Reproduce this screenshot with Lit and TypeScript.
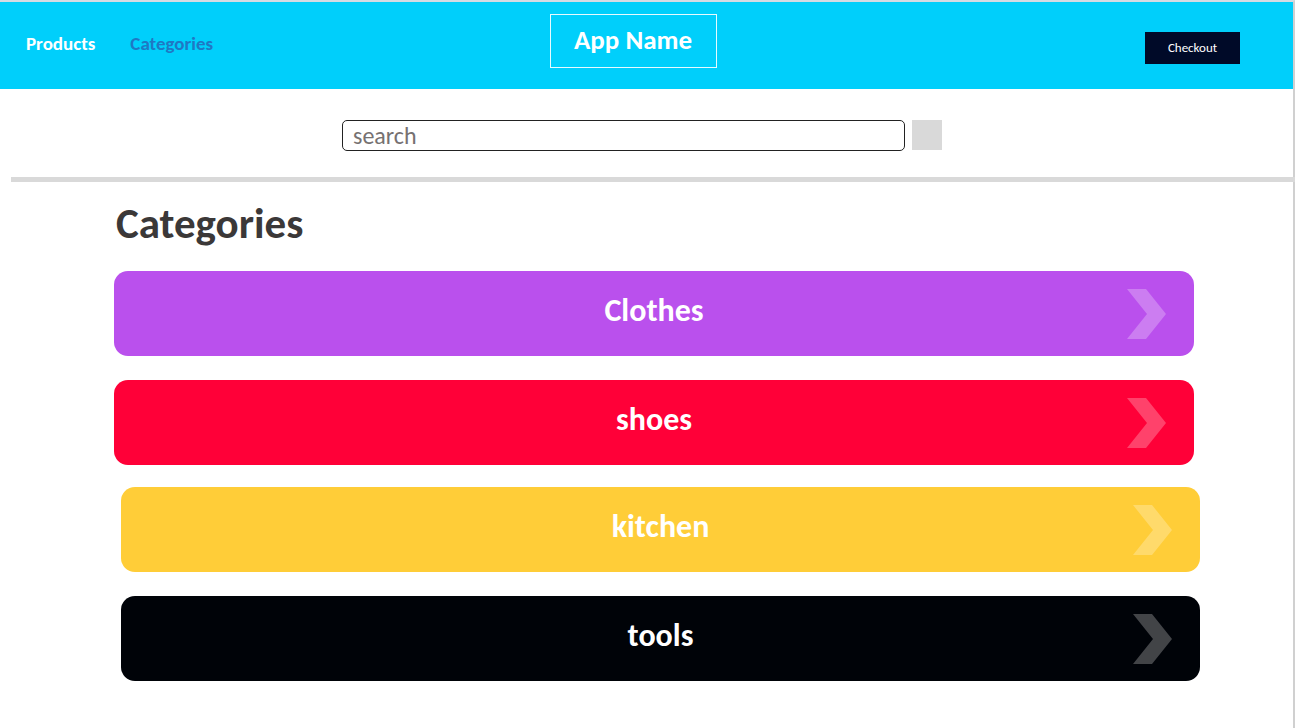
import { LitElement, html, css } from "lit";
import { customElement, property } from "lit/decorators.js";

@customElement("category-card")
class CategoryCard extends LitElement {
  @property() name = "";

  static styles = css`
    :host {
      display: block;
    }
    .card {
      display: grid;
      grid-template-columns: 1fr auto 1fr;
      align-items: center;
      box-sizing: border-box;
      min-height: 85px;
      padding: 0 28px;
      border-radius: 14px;
      background: var(--card-color);
      color: #fff;
      font-weight: 700;
      font-size: 32px;
      line-height: 32px;
      text-decoration: none;
    }
    .name {
      grid-column: 2;
      padding-bottom: 6px;
    }
    .arrow {
      display: block;
      justify-self: end;
      width: 39px;
      height: 50px;
      fill: #fff;
      fill-opacity: 0.26;
    }
  `;

  render() {
    return html`
      <a class="card" href="#${this.name.toLowerCase()}">
        <span class="name">${this.name}</span>
        <svg class="arrow" viewBox="0 0 39 50" aria-hidden="true">
          <path d="M0 0H19L39 25L19 50H0L20 25Z" />
        </svg>
      </a>
    `;
  }
}

@customElement("app-root")
class AppRoot extends LitElement {
  static styles = css`
    :host {
      display: block;
      box-sizing: border-box;
      min-height: 100vh;
      border-top: 2px solid #d5dbe3;
      border-right: 2px solid #d0d0d0;
      background: #fff;
      font-family: Carlito, Lato, sans-serif;
    }
    .header {
      display: grid;
      grid-template-columns: 1fr auto 1fr;
      align-items: start;
      padding: 12px 53px 21px 26px;
      background: #00cffb;
    }
    .nav {
      display: flex;
      gap: 35px;
      padding-top: 20px;
      font-size: 19px;
      font-weight: 700;
      line-height: 20px;
    }
    .link {
      color: #fff;
      text-decoration: none;
    }
    .current {
      color: #1f78c4;
    }
    .brand {
      box-sizing: border-box;
      min-width: 167px;
      height: 54px;
      border: 1px solid #e6faff;
      color: #fff;
      font-size: 27px;
      font-weight: 700;
      line-height: 50px;
      text-align: center;
    }
    .checkout {
      justify-self: end;
      width: 95px;
      height: 32px;
      margin-top: 18px;
      padding: 0;
      border: 0;
      background: #000a28;
      color: #fff;
      font: 400 13px/20px Carlito, Lato, sans-serif;
    }
    .search {
      display: flex;
      justify-content: center;
      gap: 7px;
      padding: 31px 9px 26px 0;
    }
    .field {
      box-sizing: border-box;
      width: 563px;
      height: 31px;
      padding: 0 10px;
      border: 1px solid #222;
      border-radius: 5px;
      background: #fff;
      color: #333;
      font: 400 24px/28px Carlito, Lato, sans-serif;
    }
    .field::placeholder {
      color: #767171;
      opacity: 1;
    }
    .go {
      width: 30px;
      height: 30px;
      padding: 0;
      border: 0;
      background: #d9d9d9;
    }
    .rule {
      height: 5px;
      margin: 0 -2px 0 11px;
      border: 0;
      background: #d9d9d9;
    }
    .title {
      margin: 0;
      padding: 18px 116px 23px;
      color: #3b3838;
      font-size: 43px;
      font-weight: 700;
      line-height: 48px;
    }
    .group {
      display: flex;
      flex-direction: column;
      gap: 24px;
      margin: 0 99px 22px 114px;
      padding: 0;
      list-style: none;
    }
    .shifted {
      margin: 0 93px 22px 121px;
    }
    .purple {
      --card-color: #ba50ed;
    }
    .red {
      --card-color: #ff0038;
    }
    .yellow {
      --card-color: #ffcd38;
    }
    .black {
      --card-color: #000308;
    }
  `;

  render() {
    return html`
      <header class="header">
        <nav class="nav">
          <a class="link" href="#products">Products</a>
          <a class="link current" href="#categories" aria-current="page">Categories</a>
        </nav>
        <div class="brand">App Name</div>
        <button class="checkout" type="button">Checkout</button>
      </header>
      <form class="search" role="search">
        <input class="field" type="text" placeholder="search" aria-label="search" />
        <button class="go" type="button" aria-label="search"></button>
      </form>
      <hr class="rule" />
      <main>
        <h1 class="title">Categories</h1>
        <ul class="group">
          <li><category-card class="purple" name="Clothes"></category-card></li>
          <li><category-card class="red" name="shoes"></category-card></li>
        </ul>
        <ul class="group shifted">
          <li><category-card class="yellow" name="kitchen"></category-card></li>
          <li><category-card class="black" name="tools"></category-card></li>
        </ul>
      </main>
    `;
  }
}
